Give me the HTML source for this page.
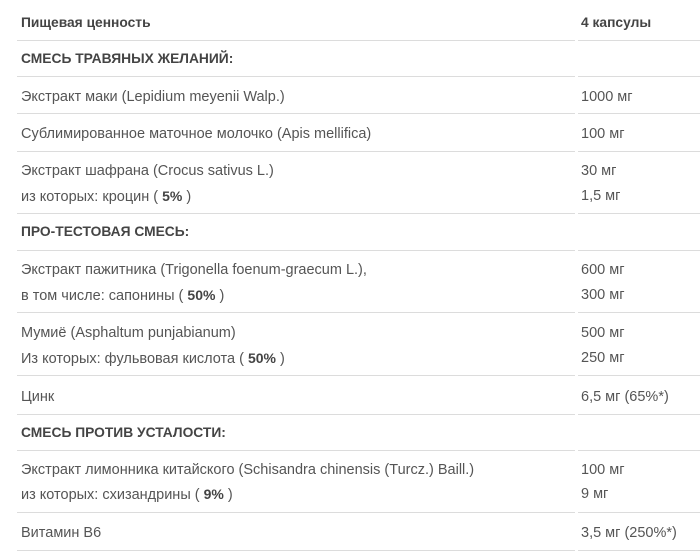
<!DOCTYPE html>
<html><head><meta charset="utf-8"><style>
body{margin:0;width:700px;height:560px;background:#fff;position:relative;overflow:hidden;font-family:"Liberation Sans",sans-serif;font-size:14.5px;color:#555}
.t{position:absolute;white-space:nowrap;line-height:16px}
.b{font-weight:bold;color:#444;font-size:13.8px}
.t b{font-size:14px;color:#444}
.l{position:absolute;height:1px;background:#dcdcdc}
</style></head><body>
<div class="t b" style="left:21px;top:15px">Пищевая ценность</div>
<div class="t b" style="left:581px;top:15px">4 капсулы</div>
<div class="l" style="left:17px;width:558px;top:40px"></div><div class="l" style="left:578px;width:122px;top:40px"></div>
<div class="t b" style="left:21px;top:51px">СМЕСЬ ТРАВЯНЫХ ЖЕЛАНИЙ:</div>
<div class="l" style="left:17px;width:558px;top:76px"></div><div class="l" style="left:578px;width:122px;top:76px"></div>
<div class="t" style="left:21px;top:89px">Экстракт маки (Lepidium meyenii Walp.)</div>
<div class="t" style="left:581px;top:89px">1000 мг</div>
<div class="l" style="left:17px;width:558px;top:113px"></div><div class="l" style="left:578px;width:122px;top:113px"></div>
<div class="t" style="left:21px;top:126px">Сублимированное маточное молочко (Apis mellifica)</div>
<div class="t" style="left:581px;top:126px">100 мг</div>
<div class="l" style="left:17px;width:558px;top:151px"></div><div class="l" style="left:578px;width:122px;top:151px"></div>
<div class="t" style="left:21px;top:163px">Экстракт шафрана (Crocus sativus L.)</div>
<div class="t" style="left:581px;top:163px">30 мг</div>
<div class="t" style="left:21px;top:188px">из которых: кроцин ( <b>5%</b> )</div>
<div class="t" style="left:581px;top:188px">1,5 мг</div>
<div class="l" style="left:17px;width:558px;top:213px"></div><div class="l" style="left:578px;width:122px;top:213px"></div>
<div class="t b" style="left:21px;top:224px">ПРО-ТЕСТОВАЯ СМЕСЬ:</div>
<div class="l" style="left:17px;width:558px;top:250px"></div><div class="l" style="left:578px;width:122px;top:250px"></div>
<div class="t" style="left:21px;top:262px">Экстракт пажитника (Trigonella foenum-graecum L.),</div>
<div class="t" style="left:581px;top:262px">600 мг</div>
<div class="t" style="left:21px;top:287px">в том числе: сапонины ( <b>50%</b> )</div>
<div class="t" style="left:581px;top:287px">300 мг</div>
<div class="l" style="left:17px;width:558px;top:312px"></div><div class="l" style="left:578px;width:122px;top:312px"></div>
<div class="t" style="left:21px;top:325px">Мумиё (Asphaltum punjabianum)</div>
<div class="t" style="left:581px;top:325px">500 мг</div>
<div class="t" style="left:21px;top:350px">Из которых: фульвовая кислота ( <b>50%</b> )</div>
<div class="t" style="left:581px;top:350px">250 мг</div>
<div class="l" style="left:17px;width:558px;top:375px"></div><div class="l" style="left:578px;width:122px;top:375px"></div>
<div class="t" style="left:21px;top:389px">Цинк</div>
<div class="t" style="left:581px;top:389px">6,5 мг (65%*)</div>
<div class="l" style="left:17px;width:558px;top:414px"></div><div class="l" style="left:578px;width:122px;top:414px"></div>
<div class="t b" style="left:21px;top:425px">СМЕСЬ ПРОТИВ УСТАЛОСТИ:</div>
<div class="l" style="left:17px;width:558px;top:450px"></div><div class="l" style="left:578px;width:122px;top:450px"></div>
<div class="t" style="left:21px;top:462px">Экстракт лимонника китайского (Schisandra chinensis (Turcz.) Baill.)</div>
<div class="t" style="left:581px;top:462px">100 мг</div>
<div class="t" style="left:21px;top:486px">из которых: схизандрины ( <b>9%</b> )</div>
<div class="t" style="left:581px;top:486px">9 мг</div>
<div class="l" style="left:17px;width:558px;top:512px"></div><div class="l" style="left:578px;width:122px;top:512px"></div>
<div class="t" style="left:21px;top:525px">Витамин B6</div>
<div class="t" style="left:581px;top:525px">3,5 мг (250%*)</div>
<div class="l" style="left:17px;width:558px;top:550px"></div><div class="l" style="left:578px;width:122px;top:550px"></div>
</body></html>
